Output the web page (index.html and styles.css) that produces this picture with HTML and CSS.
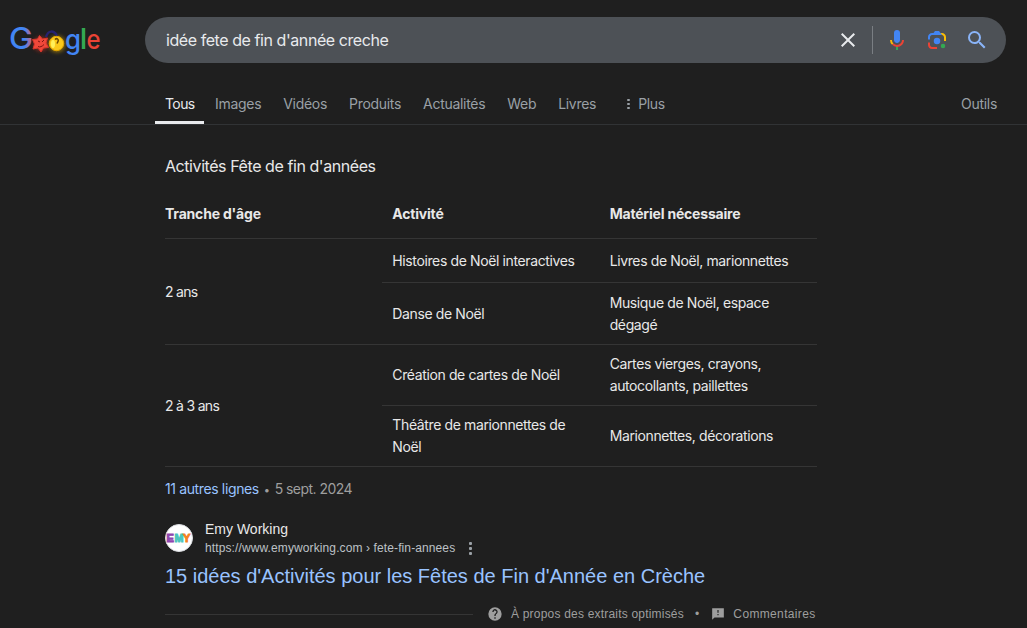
FILE: index.html
```
<!DOCTYPE html>
<html lang="fr">
<head>
  <meta charset="UTF-8">
  <title>idée fete de fin d'année creche - Recherche Google</title>
  <link rel="stylesheet" href="styles.css">
</head>
<body>

  <header class="header">
    <svg class="logo" width="96" height="44" viewBox="0 0 96 44">
      <defs>
        <filter id="glow" x="-50%" y="-50%" width="200%" height="200%"><feGaussianBlur stdDeviation="2.2"/></filter>
        <linearGradient id="gcolor"><stop offset="0.65" stop-color="#4285f4"/><stop offset="1" stop-color="#e06070"/></linearGradient>
      </defs>
      <text x="0" y="31" font-size="30" textLength="24" lengthAdjust="spacingAndGlyphs" fill="url(#gcolor)">G</text>
      <text x="56" y="31" font-size="27" textLength="16" lengthAdjust="spacingAndGlyphs" fill="#4285f4">g</text>
      <text x="71.500" y="31" font-size="29" font-weight="700" textLength="6" lengthAdjust="spacingAndGlyphs" fill="#34a853">l</text>
      <text x="77.500" y="31" font-size="26" textLength="14" lengthAdjust="spacingAndGlyphs" fill="#ea4335">e</text>
      <circle cx="32" cy="26" r="7" fill="#e53020" opacity=".6" filter="url(#glow)"/>
      <circle cx="48" cy="26" r="8" fill="#f5b800" opacity=".6" filter="url(#glow)"/>
      <path d="M37 19C39 12 45 12 48 18" fill="none" stroke="#26236f" stroke-width="2.500"/>
      <path d="M30.500 17.500l3 3.500 5-1-1.500 5 2.500 4.500-5 .5-2.500 4-3-4-5 1 1.500-5-2-4.500 5-.5z" fill="#f0483a" stroke="#d8352a" stroke-width="1"/>
      <path d="M29 23l2 1M35 22l-2 2M29 28.500c2 1 4 0 6-2" fill="none" stroke="#7d1512"/>
      <circle cx="47.500" cy="25.500" r="7.200" fill="#fbc91b" stroke="#e0a400"/>
      <path d="M46 21.500c2-2 4 0 3 2l-1 2" fill="none" stroke="#684500" stroke-width="1.500"/>
      <ellipse cx="44" cy="26" rx="2" ry="4" fill="#fff05a"/>
    </svg>

    <div class="search">
      <span class="query">idée fete de fin d'année creche</span>
      <svg class="clear" width="24" height="24" viewBox="0 0 24 24"><path d="M19 6.410L17.590 5 12 10.590 6.410 5 5 6.410 10.590 12 5 17.590 6.410 19 12 13.410 17.590 19 19 17.590 13.410 12z" fill="#e8eaed"/></svg>
      <span class="divider"></span>
      <svg class="mic" width="24" height="24" viewBox="0 0 24 24">
        <path fill="#4285f4" d="M12 15c1.660 0 3-1.310 3-2.970V5a3 3 0 0 0-6 0v7.030C9 13.690 10.340 15 12 15z"/>
        <path fill="#34a853" d="M11 18.080h2V22h-2z"/>
        <path fill="#fbbc04" d="M7.050 16.870A7 7 0 0 1 5 12h2c0 1.370.5 2.550 1.460 3.450z"/>
        <path fill="#ea4335" d="M12 16.930a5 5 0 0 1-3.540-1.480l-1.410 1.420A6.980 6.980 0 0 0 12 19c3.870 0 6.980-3 6.980-7H17c0 2.760-2.240 4.930-5 4.930z"/>
      </svg>
      <svg class="lens" width="24" height="24" viewBox="0 0 192 192">
        <circle fill="#34a853" cx="144.070" cy="144" r="18"/>
        <circle fill="#4285f4" cx="96.070" cy="104" r="26"/>
        <path fill="#ea4335" d="M24 135.200c0 18.110 14.690 32.800 32.800 32.800H96v-16l-40.100-.1c-8.800 0-15.900-8.190-15.900-17.900v-18H24z"/>
        <path fill="#fbbc04" d="M168 72.800c0-18.110-14.690-32.800-32.800-32.800H116l20 16c8.800 0 16 8.290 16 18v30h16z"/>
        <path fill="#4285f4" d="M112 24H80L68 40H56.800C38.690 40 24 54.690 24 72.800V92h16V74c0-9.710 7.200-18 16-18h80l-24-32z"/>
      </svg>
      <svg class="loupe" width="24" height="24" viewBox="0 0 24 24"><path fill="#8ab4f8" d="M15.500 14h-.79l-.28-.27A6.470 6.470 0 0 0 16 9.500 6.500 6.500 0 1 0 9.500 16c1.610 0 3.090-.59 4.230-1.570l.27.280v.79l5 4.990L20.490 19zm-6 0a4.500 4.500 0 1 1 0-9 4.500 4.500 0 0 1 0 9z"/></svg>
    </div>
  </header>

  <nav class="tabs">
    <span class="tab active">Tous</span>
    <span class="tab">Images</span>
    <span class="tab">Vidéos</span>
    <span class="tab">Produits</span>
    <span class="tab">Actualités</span>
    <span class="tab">Web</span>
    <span class="tab">Livres</span>
    <span class="tab more"><span class="dots"><i></i><i></i><i></i></span>Plus</span>
    <span class="tools">Outils</span>
  </nav>

  <main class="result">
    <h2 class="title">Activités Fête de fin d'années</h2>

    <table class="table">
      <tr class="head">
        <th>Tranche d'âge</th>
        <th>Activité</th>
        <th>Matériel nécessaire</th>
      </tr>
      <tr class="short">
        <td rowspan="2">2 ans</td>
        <td>Histoires de Noël interactives</td>
        <td>Livres de Noël, marionnettes</td>
      </tr>
      <tr class="tall">
        <td>Danse de Noël</td>
        <td>Musique de Noël, espace<br>dégagé</td>
      </tr>
      <tr>
        <td rowspan="2">2 à 3 ans</td>
        <td>Création de cartes de Noël</td>
        <td>Cartes vierges, crayons,<br>autocollants, paillettes</td>
      </tr>
      <tr>
        <td>Théâtre de marionnettes de<br>Noël</td>
        <td>Marionnettes, décorations</td>
      </tr>
    </table>

    <div class="lines"><a>11 autres lignes</a><span class="dot">•</span><span class="date">5 sept. 2024</span></div>

    <div class="source">
      <svg class="favicon" width="28" height="28" viewBox="0 0 28 28">
        <circle cx="14" cy="14" r="13.500" fill="#fff" stroke="#dadce0"/>
        <text x="1.500" y="18" fill="#8e44ad" stroke="#8e44ad">E</text>
        <text x="9.500" y="18" fill="#4cc5bd" stroke="#4cc5bd" textLength="9" lengthAdjust="spacingAndGlyphs">M</text>
        <text x="18" y="18" fill="#f5821f" stroke="#f5821f">Y</text>
      </svg>
      <div>
        <div class="site">Emy Working</div>
        <div class="url"><span>https://www.emyworking.com › fete-fin-annees</span><span class="dots"><i></i><i></i><i></i></span></div>
      </div>
    </div>

    <h3 class="link">15 idées d'Activités pour les Fêtes de Fin d'Année en Crèche</h3>

    <div class="about">
      <span class="rule"></span>
      <svg width="16" height="16" viewBox="0 0 24 24"><path fill="#9e9e9e" d="M12 2a10 10 0 1 0 0 20 10 10 0 0 0 0-20zm1 17h-2v-2h2zm2.070-7.750l-.9.920C13.450 12.900 13 13.500 13 15h-2v-.5c0-1.100.45-2.100 1.170-2.830l1.240-1.260A2 2 0 1 0 10 9H8a4 4 0 1 1 7.070 2.250z"/></svg>
      <span class="about-text">À propos des extraits optimisés</span>
      <span class="sep">•</span>
      <svg width="14" height="14" viewBox="0 0 24 24"><path fill="#9e9e9e" d="M22 2H2.010L2 22l4-4h16zm-9 12h-2v-2h2zm0-4h-2V5h2z"/></svg>
      <span class="comments">Commentaires</span>
    </div>
  </main>

</body>
</html>
```
FILE: styles.css
```
body {
  margin: 0;
  height: 628px;
  overflow: hidden;
  background: #1f1f1f;
  color: #e8e8e8;
  font-family: Inter, Roboto, sans-serif;
  font-size: 14px;
}

svg {
  display: block;
  flex: none;
}

.header {
  display: flex;
  align-items: flex-start;
  padding: 17px 21px 0 9px;
}

.logo {
  margin-top: 1px;
  font-weight: 500;
}

.search {
  display: flex;
  align-items: center;
  flex: 1;
  height: 46px;
  margin-left: 40px;
  padding: 0 17px 0 21px;
  border-radius: 23px;
  background: #4d5156;
}

.query {
  flex: 1;
  color: #e8eaed;
  font-size: 16px;
  letter-spacing: -0.43px;
}

.divider {
  width: 1px;
  height: 28px;
  margin: 0 12px;
  background: #7a7e83;
}

.lens {
  margin: 0 16px;
}

.tabs {
  display: flex;
  height: 41px;
  margin-top: 20px;
  padding: 0 30px 0 155px;
  border-bottom: 1px solid #313335;
  color: #9aa0a6;
  line-height: 41px;
  letter-spacing: -0.3px;
}

.tab {
  padding: 0 11px;
}

.tab.active {
  width: 30px;
  height: 38px;
  padding: 0 9px 0 10px;
  border-bottom: 3px solid #e8eaed;
  color: #e8eaed;
  letter-spacing: -0.6px;
}

.more {
  display: flex;
  align-items: center;
  margin-left: 5px;
}

.dots {
  display: inline-flex;
  flex-direction: column;
  gap: 2px;
  width: 3px;
}

.dots i {
  width: 3px;
  height: 3px;
  border-radius: 1px;
  background: #9aa0a6;
}

.more .dots {
  margin: 0 8px 0 4px;
}

.more .dots i {
  height: 2px;
}

.tools {
  margin-left: auto;
}

.result {
  width: 652px;
  margin-left: 165px;
}

.title {
  margin: 29px 0 0;
  font-size: 16px;
  font-weight: 400;
  line-height: 24px;
  letter-spacing: -0.43px;
}

.table {
  width: 652px;
  margin-top: 12px;
  border-spacing: 0;
  table-layout: fixed;
  line-height: 22px;
  letter-spacing: -0.38px;
}

.table th,
.table td {
  box-sizing: border-box;
  height: 61px;
  padding: 0 0 0 10px;
  border-bottom: 1px solid #353535;
  text-align: left;
}

.table th {
  letter-spacing: -0.2px;
}

.table th:first-child,
.table td[rowspan] {
  padding-left: 0;
}

.table td[rowspan] {
  letter-spacing: -0.7px;
}

.table .head th {
  height: 49px;
}

.table .short td:not([rowspan]) {
  height: 44px;
}

.table .tall td {
  height: 62px;
}

.lines {
  margin-top: 11px;
  line-height: 22px;
  letter-spacing: -0.37px;
}

.lines a {
  color: #99c3ff;
}

.lines .dot {
  margin: 0 5px;
  color: #9e9e9e;
  font-size: 11px;
}

.date {
  color: #9e9e9e;
  letter-spacing: -0.55px;
}

.source {
  display: flex;
  align-items: center;
  gap: 12px;
  margin-top: 18px;
  font-family: "Liberation Sans", Arial, sans-serif;
}

.favicon text {
  font-family: "Liberation Sans", Arial, sans-serif;
  font-size: 11px;
  font-weight: 700;
}

.site {
  line-height: 20px;
}

.url {
  display: flex;
  align-items: center;
  gap: 14px;
  color: #bdc1c6;
  font-size: 12px;
  line-height: 18px;
  letter-spacing: 0.11px;
}

.link {
  margin: 6px 0 0;
  color: #99c3ff;
  font-family: "Liberation Sans", Arial, sans-serif;
  font-size: 20px;
  font-weight: 400;
  line-height: 26px;
}

.about {
  display: flex;
  align-items: center;
  margin-top: 16px;
  color: #9e9e9e;
  font-family: "Liberation Sans", Arial, sans-serif;
  font-size: 12px;
  line-height: 18px;
  letter-spacing: 0.2px;
}

.rule {
  width: 308px;
  height: 1px;
  margin-right: 14px;
  background: #353535;
}

.about-text {
  margin-left: 8px;
}

.sep {
  margin: 0 12px 0 11px;
}

.comments {
  margin-left: 8px;
  letter-spacing: 0.35px;
}
```
